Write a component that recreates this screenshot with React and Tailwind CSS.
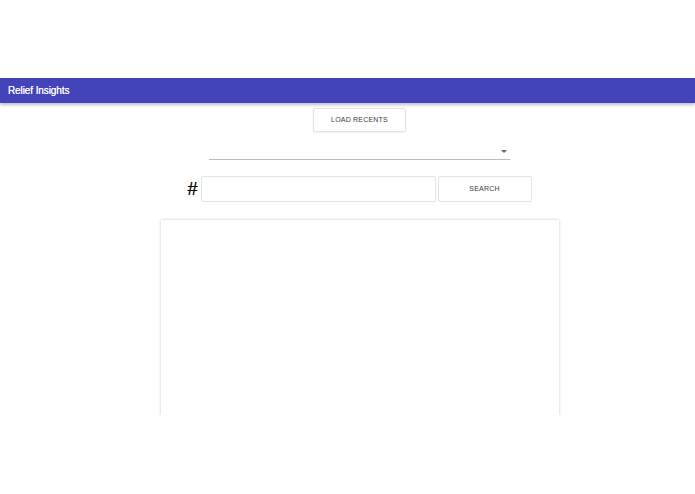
export default function App() {
  return (
    <div className="w-[695px] h-[494px] bg-white overflow-hidden" style={{ fontFamily: '"Liberation Sans", Arial, sans-serif' }}>
      <div className="h-[78px]" />
      <div className="h-[25px] bg-[#4343ba] flex items-center px-[8px] shadow-[0_2px_3px_rgba(0,0,0,0.25)] relative z-10">
        <span className="text-white text-[10px] font-normal tracking-[-0.1px] [text-shadow:0_0_0.4px_#fff]">Relief Insights</span>
      </div>
      <div className="flex flex-col items-center pl-[24px]">
        <button className="mt-[5px] w-[93px] h-[24px] border border-[#e2e2e2] rounded-[2px] bg-white text-[7px] font-normal text-[#3a3a3a] tracking-[0.2px] shadow-[0_1px_2px_rgba(0,0,0,0.06)]">
          LOAD RECENTS
        </button>
        <div className="mt-[12px] w-[301px] h-[16px] border-b border-[#bdbdbd] flex items-center justify-end pr-[3px]">
          <svg width="6" height="4" viewBox="0 0 6 4"><path d="M0 0 L6 0 L3 3 Z" fill="#666" /></svg>
        </div>
        <div className="mt-[16px] flex items-center">
          <span className="text-[18px] text-[#111] mr-[3px] leading-none [text-shadow:0_0_0.5px_#111]">#</span>
          <div className="w-[235px] h-[26px] border border-[#e2e2e2] rounded-[2px] bg-white" />
          <button className="ml-[2px] w-[94px] h-[26px] border border-[#e2e2e2] rounded-[2px] bg-white text-[7px] font-normal text-[#3a3a3a] tracking-[0.2px]">
            SEARCH
          </button>
        </div>
        <div className="mt-[16px] h-[197px] overflow-hidden px-[4px] pt-[2px]">
          <div className="w-[398px] h-[260px] bg-white shadow-[0_0_3px_rgba(0,0,0,0.22)]" />
        </div>
      </div>
    </div>
  );
}
